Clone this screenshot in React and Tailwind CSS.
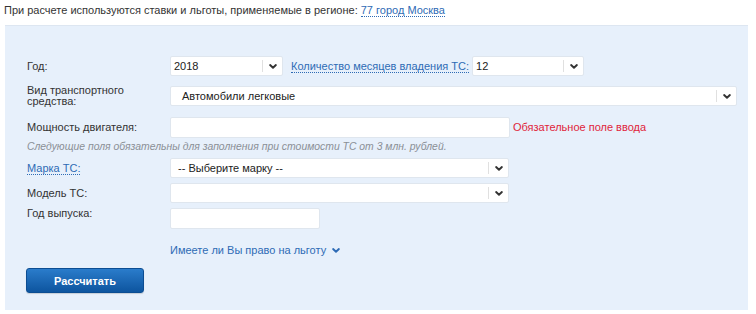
import React from 'react';

const Chevron = ({ className = '' }) => (
  <svg viewBox="0 0 10 6" className={`w-[8px] h-[5px] ${className}`} fill="none" stroke="currentColor" strokeWidth="2.4" strokeLinecap="round" strokeLinejoin="round">
    <path d="M1.4 1.2 L5 4.6 L8.6 1.2" />
  </svg>
);

const Select = ({ value, className = '' }) => (
  <div className={`h-[20px] bg-white border border-[#dfe6ee] rounded-[2px] flex items-center ${className}`}>
    <span className="flex-1 pl-[3px] text-[11px] text-[#222] truncate">{value}</span>
    <span className="h-[12px] border-l border-[#e0e0e0] w-[20px] flex items-center justify-center text-[#333]">
      <Chevron />
    </span>
  </div>
);

const Input = ({ className = '' }) => (
  <div className={`h-[21px] bg-white border border-[#dfe6ee] rounded-[2px] ${className}`} />
);

const DottedLink = ({ children }) => (
  <span className="text-[#2e6bb5] border-b border-dotted border-[#2e6bb5] leading-[12px]">{children}</span>
);

const Row = ({ label, children, className = '' }) => (
  <div className={`flex items-center ${className}`}>
    <div className="w-[143px] shrink-0 text-[11px] text-[#333] leading-[11px]">{label}</div>
    {children}
  </div>
);

export default function App() {
  return (
    <div className="w-[756px] h-[314px] bg-white font-['Liberation_Sans',Arial,sans-serif] text-[#333] overflow-hidden">
      <div className="pl-[4px] pt-[2px] h-[25px] text-[11px]">
        При расчете используются ставки и льготы, применяемые в регионе: <DottedLink>77 город Москва</DottedLink>
      </div>
      <div className="ml-[5px] w-[743px] h-[285px] bg-[#e7f0fb] border-t border-[#dde6f1] pl-[22px] pr-[11px] pt-[30px]">
        <Row label="Год:">
          <Select value="2018" className="w-[113px]" />
          <span className="ml-[8px] mr-[3px] text-[11px]"><DottedLink>Количество месяцев владения ТС:</DottedLink></span>
          <Select value="12" className="w-[112px]" />
        </Row>
        <Row label={<>Вид транспортного<br />средства:</>} className="mt-[9px]">
          <Select value={<span className="pl-[8px]">Автомобили легковые</span>} className="flex-1" />
        </Row>
        <Row label="Мощность двигателя:" className="mt-[10px]">
          <Input className="w-[340px]" />
          <span className="ml-[3px] text-[11px] text-[#e0243a]">Обязательное поле ввода</span>
        </Row>
        <div className="mt-[3px] text-[10.4px] italic text-[#8a8f96] leading-[12px]">
          Следующие поля обязательны для заполнения при стоимости ТС от 3 млн. рублей.
        </div>
        <Row label={<span className="text-[11px]"><DottedLink>Марка ТС:</DottedLink></span>} className="mt-[5px]">
          <Select value={<span className="pl-[4px]">-- Выберите марку --</span>} className="w-[339px]" />
        </Row>
        <Row label="Модель ТС:" className="mt-[5px]">
          <Select value="" className="w-[339px]" />
        </Row>
        <Row label="Год выпуска:" className="mt-[5px] items-start">
          <Input className="w-[150px]" />
        </Row>
        <div className="mt-[13px] ml-[143px] flex items-center gap-[6px] text-[11px] text-[#2e6bb5]">
          Имеете ли Вы право на льготу
          <Chevron />
        </div>
        <div className="mt-[9px] -ml-[1px]">
          <button className="w-[118px] h-[25px] rounded-[3px] bg-gradient-to-b from-[#2a7ccb] to-[#0d559f] border border-[#0c4d92] text-white text-[11px] font-bold shadow-[0_1px_1px_rgba(0,0,0,0.15)]">
            Рассчитать
          </button>
        </div>
      </div>
    </div>
  );
}
